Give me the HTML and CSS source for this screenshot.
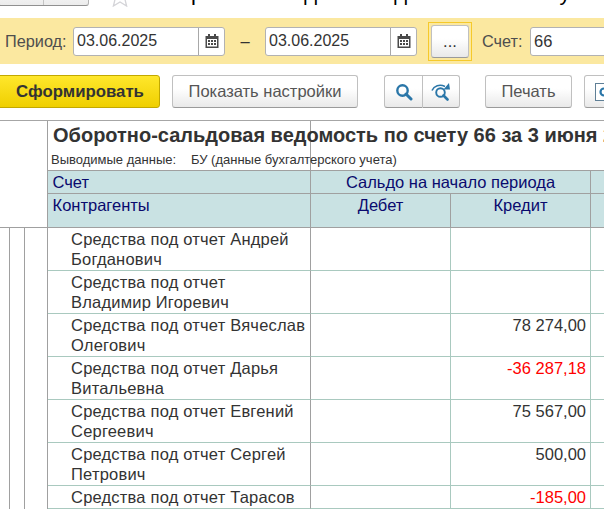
FILE: index.html
```html
<!DOCTYPE html>
<html lang="en">
<head>
    <meta charset="UTF-8" />
    <title>Оборотно-сальдовая ведомость</title>
    <link rel="stylesheet" href="styles.css">
</head>
<body>

<!-- Window title, cut off by the top edge -->
<div class="topbar">
    <div class="nav-group">
        <div class="nav-btn"></div>
        <div class="nav-btn"></div>
    </div>
    <svg class="star" width="22" height="22" viewBox="0 0 22 22">
        <path d="M11 1l3 7 7.500.6-5.700 5 1.800 7.400L11 17l-6.600 4 1.800-7.400-5.700-5L8 8z" fill="#fff" stroke="#d4d4d8" stroke-width="1.300"/>
    </svg>
    <div class="doc-title">Оборотно-сальдовая ведомость по счету 66 за 3 июня 2025 г.</div>
</div>

<!-- Period bar -->
<div class="period-bar">
    <span class="label label-period">Период:</span>
    <div class="date-field">
        <span class="date-value">03.06.2025</span>
        <span class="date-btn">
            <svg width="14" height="14" viewBox="0 0 14 14"><path d="M3 0h2v2h4V0h2v2h2.500v12H.5V2H3zM2 5v7.500h10V5zm1 1h2v2H3zm3 0h2v2H6zm3 0h2v2H9zM3 9h2v2H3zm3 0h2v2H6zm3 0h2v2H9z" fill="#4a4a4a" fill-rule="evenodd"/></svg>
        </span>
    </div>
    <span class="dash">–</span>
    <div class="date-field">
        <span class="date-value">03.06.2025</span>
        <span class="date-btn">
            <svg width="14" height="14" viewBox="0 0 14 14"><path d="M3 0h2v2h4V0h2v2h2.500v12H.5V2H3zM2 5v7.500h10V5zm1 1h2v2H3zm3 0h2v2H6zm3 0h2v2H9zM3 9h2v2H3zm3 0h2v2H6zm3 0h2v2H9z" fill="#4a4a4a" fill-rule="evenodd"/></svg>
        </span>
    </div>
    <div class="dots-focus"><div class="btn dots-btn">...</div></div>
    <span class="label label-account">Счет:</span>
    <div class="account-field">66</div>
</div>

<!-- Commands -->
<div class="toolbar">
    <div class="btn btn-primary">Сформировать</div>
    <div class="btn btn-settings">Показать настройки</div>
    <div class="btn-group">
        <div class="btn btn-icon">
            <svg width="18" height="18" viewBox="0 0 18 18"><circle cx="7.500" cy="7.500" r="5.200" fill="none" stroke="#2a76a8" stroke-width="2.400"/><path d="M11 11l5 5" stroke="#2a76a8" stroke-width="3" stroke-linecap="round"/></svg>
        </div>
        <div class="btn btn-icon">
            <svg width="20" height="18" viewBox="0 0 20 18"><circle cx="9.500" cy="9.500" r="4.300" fill="none" stroke="#2a76a8" stroke-width="1.900"/><path d="M12.500 12.500l4 4" stroke="#2a76a8" stroke-width="2.600" stroke-linecap="round"/><path d="M1 7.500C3 3 8.500 .8 14 3.500" fill="none" stroke="#2a76a8" stroke-width="1.600"/><path d="M12.500 6.500L19 6.500 18 0z" fill="#2a76a8"/></svg>
        </div>
    </div>
    <div class="btn btn-print">Печать</div>
    <div class="btn btn-more">
        <svg width="20" height="20" viewBox="0 0 20 20"><rect x=".5" y="1.500" width="18" height="17" fill="#fff" stroke="#5f7f96"/><circle cx="9" cy="10" r="3.500" fill="none" stroke="#2a76a8" stroke-width="2.200"/></svg>
    </div>
</div>

<!-- Report -->
<div class="sheet">
    <table class="report">
        <colgroup>
            <col class="c-g1"><col class="c-g2"><col class="c-g3">
            <col class="c-name"><col class="c-sum"><col class="c-sum"><col class="c-rest">
        </colgroup>
        <tr class="r-title">
            <td class="gutter-head" colspan="3" rowspan="4"></td>
            <td class="title-cell"><div class="report-title">Оборотно-сальдовая ведомость по счету 66 за 3 июня 2025 г.</div></td>
            <td colspan="3"></td>
        </tr>
        <tr class="r-sub">
            <td class="sub-cell"><div class="report-sub"><span class="sub-key">Выводимые данные:</span>БУ (данные бухгалтерского учета)</div></td>
            <td class="sub-rest" colspan="3"></td>
        </tr>
        <tr class="r-head1">
            <th class="left">Счет</th>
            <th colspan="2">Сальдо на начало периода</th>
            <th class="no-right"></th>
        </tr>
        <tr class="r-head2">
            <th class="left">Контрагенты</th>
            <th>Дебет</th>
            <th>Кредит</th>
            <th class="no-right"></th>
        </tr>
        <tr class="r-data">
            <td class="g"></td><td class="g"></td><td class="g"></td>
            <td class="name">Средства под отчет Андрей Богданович</td><td class="debit"></td><td class="num"></td><td class="rest"></td>
        </tr>
        <tr class="r-data">
            <td class="g"></td><td class="g"></td><td class="g"></td>
            <td class="name">Средства под отчет Владимир Игоревич</td><td class="debit"></td><td class="num"></td><td class="rest"></td>
        </tr>
        <tr class="r-data">
            <td class="g"></td><td class="g"></td><td class="g"></td>
            <td class="name">Средства под отчет Вячеслав Олегович</td><td class="debit"></td><td class="num">78 274,00</td><td class="rest"></td>
        </tr>
        <tr class="r-data">
            <td class="g"></td><td class="g"></td><td class="g"></td>
            <td class="name">Средства под отчет Дарья Витальевна</td><td class="debit"></td><td class="num neg">-36 287,18</td><td class="rest"></td>
        </tr>
        <tr class="r-data">
            <td class="g"></td><td class="g"></td><td class="g"></td>
            <td class="name">Средства под отчет Евгений Сергеевич</td><td class="debit"></td><td class="num">75 567,00</td><td class="rest"></td>
        </tr>
        <tr class="r-data">
            <td class="g"></td><td class="g"></td><td class="g"></td>
            <td class="name">Средства под отчет Сергей Петрович</td><td class="debit"></td><td class="num">500,00</td><td class="rest"></td>
        </tr>
        <tr class="r-short">
            <td class="g"></td><td class="g"></td><td class="g"></td>
            <td class="name">Средства под отчет Тарасов</td><td class="debit"></td><td class="num neg">-185,00</td><td class="rest"></td>
        </tr>
    </table>
</div>

</body>
</html>
```

FILE: styles.css
```css
html, body {
    margin: 0;
    padding: 0;
    height: 510px;
    overflow: hidden;
}

body {
    background-color: #fff;
    font-family: "Liberation Sans", Arial, sans-serif;
    font-size: 16.5px;
    color: #333;
}

/* top row */
.topbar {
    display: flex;
    align-items: flex-end;
    height: 6px;
    padding-bottom: 12px;
    overflow: hidden;
}

.nav-group {
    display: flex;
    flex: none;
    width: 91px;
    height: 28px;
    margin-left: -2px;
    border: 1px solid #b4b4b4;
    border-bottom-color: #909090;
    border-radius: 3px;
    background: linear-gradient(#fff, #ececec);
    box-sizing: border-box;
}

.nav-btn {
    flex: 1;
    border-right: 1px solid #c4c4c4;
}

.nav-btn:last-child {
    border-right: none;
}

.star {
    flex: none;
    margin-left: 20px;
    margin-bottom: -1px;
}

.doc-title {
    flex: none;
    margin-left: 18px;
    font-size: 22px;
    line-height: 26px;
    color: #000;
    white-space: nowrap;
}

/* period bar */
.period-bar {
    display: flex;
    align-items: center;
    height: 46px;
    padding-left: 5px;
    background-color: #fbe8a0;
}

.label {
    flex: none;
    color: #4e4e4e;
    font-size: 16.3px;
}

.label-period {
    width: 68px;
}

.label-account {
    width: 48px;
    margin-left: 10px;
}

.date-field,
.account-field {
    display: flex;
    align-items: center;
    flex: none;
    height: 29px;
    box-sizing: border-box;
    border: 1px solid #b2b2b2;
    border-radius: 3px;
    background-color: #fff;
}

.date-field {
    width: 152px;
}

.date-value {
    flex: 1;
    padding-left: 3px;
    font-size: 16px;
}

.date-btn {
    display: flex;
    align-items: center;
    justify-content: center;
    align-self: stretch;
    width: 25px;
    border-left: 1px solid #a8a8a8;
}

.dash {
    flex: none;
    width: 40px;
    text-align: center;
}

.account-field {
    width: 90px;
    margin-right: -16px;
    padding-left: 3px;
}

.dots-focus {
    flex: none;
    margin-left: 11px;
    padding: 2px;
    border: 1px solid #f5c92a;
}

.btn {
    display: flex;
    align-items: center;
    justify-content: center;
    flex: none;
    box-sizing: border-box;
    border: 1px solid #c0c0c0;
    border-bottom-color: #9a9a9a;
    border-radius: 3px;
    background: linear-gradient(#fff 40%, #e9e9e9);
    color: #555;
}

.dots-btn {
    width: 38px;
    height: 33px;
    color: #333;
}

/* commands */
.toolbar {
    display: flex;
    align-items: center;
    height: 56px;
    box-sizing: border-box;
    padding-bottom: 1px;
}

.toolbar .btn {
    height: 33px;
}

.btn-primary {
    width: 163px;
    margin-left: -3px;
    padding-left: 3px;
    border-color: #c2a800;
    background: linear-gradient(#ffe72c, #efcf00);
    color: #333;
    font-size: 16.8px;
    font-weight: bold;
}

.btn-settings {
    width: 186px;
    margin-left: 12px;
}

.btn-group {
    display: flex;
    flex: none;
    margin-left: 26px;
}

.btn-group .btn-icon:first-child {
    width: 38px;
    border-radius: 3px 0 0 3px;
    border-right: none;
}

.btn-group .btn-icon:last-child {
    width: 38px;
    border-radius: 0 3px 3px 0;
}

.btn-print {
    width: 87px;
    margin-left: 25px;
}

.btn-more {
    width: 40px;
    margin-left: 12px;
    justify-content: flex-start;
    padding-left: 10px;
}

/* report */
.sheet {
    width: 604px;
    overflow: hidden;
    border-top: 1px solid #a6a6a6;
}

.report {
    table-layout: fixed;
    border-collapse: separate;
    border-spacing: 0;
    width: 604px;
}

.c-g1 { width: 10px; }
.c-g2 { width: 15px; }
.c-g3 { width: 23px; }
.c-name { width: 263px; }
.c-sum { width: 140px; }
.c-rest { width: 13px; }

.report td,
.report th {
    padding: 0;
    box-sizing: border-box;
}

.report .gutter-head {
    border-right: 1px solid #a0a0a0;
    border-bottom: 1px solid #a0a0a0;
}

.r-title {
    height: 28px;
}

.r-sub {
    height: 22px;
}

.title-cell,
.sub-cell {
    border-right: 1px solid #a0a0a0;
    white-space: nowrap;
}

.report .sub-cell,
.report .sub-rest {
    border-bottom: 1px solid #a0a0a0;
}

.report-title {
    padding-left: 5px;
    font-size: 20px;
    font-weight: bold;
    line-height: 28px;
}

.report-sub {
    padding-left: 3px;
    font-size: 13px;
    line-height: 21px;
}

.sub-key {
    display: inline-block;
    width: 140px;
}

.report th {
    border-right: 1px solid #a0a0a0;
    border-bottom: 1px solid #a0a0a0;
    background-color: #c9e2e3;
    color: #0a0a6e;
    font-weight: normal;
    text-align: center;
    vertical-align: top;
    line-height: 22px;
}

.report th.left {
    padding-left: 4.500px;
    text-align: left;
}

.report th.no-right {
    border-right: none;
}

.r-head1 {
    height: 23px;
}

.r-head2 {
    height: 34px;
}

.r-data {
    height: 43px;
}

.r-short {
    height: 23px;
}

.report .g {
    border-right: 1px solid #a0a0a0;
}

.report .name,
.report .debit,
.report .num,
.report .rest {
    border-bottom: 1px solid #a9c9bf;
    vertical-align: top;
    line-height: 20px;
    padding-top: 1px;
}

.report .name {
    padding-left: 23px;
    border-right: 1px solid #a0a0a0;
    letter-spacing: .2px;
}

.report .debit,
.report .num {
    border-right: 1px solid #a9c9bf;
}

.report .num {
    padding-right: 4px;
    text-align: right;
}

.report .neg {
    color: #f00;
}
```
